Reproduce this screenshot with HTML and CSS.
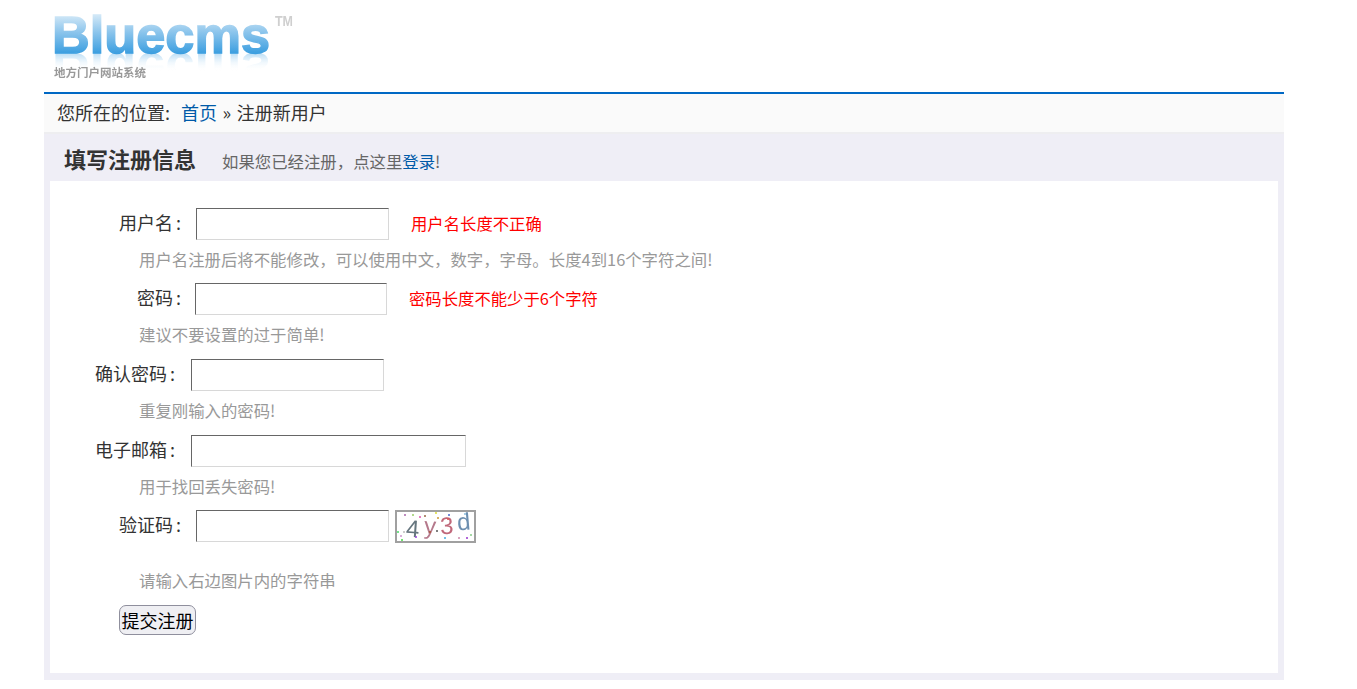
FILE: index.html
```html
<!DOCTYPE html>
<html lang="zh">
<head>
<meta charset="utf-8">
<title>注册新用户</title>
<link rel="stylesheet" href="styles.css">
</head>
<body>
<div class="page">
  <header class="top">
    <svg class="logo" width="260" height="92" viewBox="0 0 260 92">
      <defs>
        <linearGradient id="lg" x1="0" y1="15" x2="0" y2="53" gradientUnits="userSpaceOnUse">
          <stop offset="0" stop-color="#d2e8f7"/>
          <stop offset="0.45" stop-color="#8cc5ec"/>
          <stop offset="1" stop-color="#3d9fe0"/>
        </linearGradient>
        <linearGradient id="rg" x1="0" y1="53" x2="0" y2="35" gradientUnits="userSpaceOnUse">
          <stop offset="0" stop-color="#a8d4f2" stop-opacity=".8"/>
          <stop offset="1" stop-color="#ffffff" stop-opacity="0"/>
        </linearGradient>
        <filter id="sf"><feGaussianBlur stdDeviation="0.5"/></filter>
      </defs>
      <g filter="url(#sf)">
        <text class="logo-word" x="8" y="53" transform="translate(0,106) scale(1,-1)" fill="url(#rg)" textLength="218" lengthAdjust="spacingAndGlyphs" aria-hidden="true">Bluecms</text>
        <text class="logo-word" x="8" y="53" fill="url(#lg)" stroke="url(#lg)" textLength="218" lengthAdjust="spacingAndGlyphs">Bluecms</text>
        <text class="logo-tm" x="231" y="26" textLength="18" lengthAdjust="spacingAndGlyphs">TM</text>
        <text class="logo-sub" x="10" y="77" textLength="92" lengthAdjust="spacingAndGlyphs">地方门户网站系统</text>
      </g>
    </svg>
  </header>
  <nav class="crumb">您所在的位置:&nbsp;&nbsp;<a href="#">首页</a> » 注册新用户</nav>
  <main class="panel">
    <div class="panel-head">
      <h2>填写注册信息</h2>
      <span class="panel-sub">如果您已经注册，点这里<a href="#">登录</a>!</span>
    </div>
    <form class="box">
      <div class="field f-name">
        <label>用户名<span class="colon">:</span></label>
        <input class="in w193" type="text">
        <span class="err">用户名长度不正确</span>
      </div>
      <p class="hint">用户名注册后将不能修改，可以使用中文，数字，字母。长度4到16个字符之间!</p>
      <div class="field f-pass">
        <label>密码<span class="colon">:</span></label>
        <input class="in w192" type="password">
        <span class="err">密码长度不能少于6个字符</span>
      </div>
      <p class="hint hint-tall">建议不要设置的过于简单!</p>
      <div class="field f-wide">
        <label>确认密码<span class="colon">:</span></label>
        <input class="in w193" type="password">
      </div>
      <p class="hint hint-tall">重复刚输入的密码!</p>
      <div class="field f-wide">
        <label>电子邮箱<span class="colon">:</span></label>
        <input class="in w275" type="text">
      </div>
      <p class="hint">用于找回丢失密码!</p>
      <div class="field f-name">
        <label>验证码<span class="colon">:</span></label>
        <input class="in w193" type="text">
        <svg class="captcha" width="81" height="33" viewBox="0 0 81 33">
          <rect x="1" y="1" width="79" height="31" fill="#fff" stroke="#a0a0a0" stroke-width="2"/>
          <g class="cap-chars">
            <text x="11" y="27" fill="#66767f" transform="rotate(4 18 20)">4</text>
            <text x="29" y="24" fill="#b5798c" transform="rotate(3 36 20)">y</text>
            <text x="45" y="24" fill="#c0687a" transform="rotate(-3 51 16)">3</text>
            <text x="62" y="20" fill="#6d8fb0" transform="rotate(-5 68 12)">d</text>
          </g>
          <g>
            <circle cx="10" cy="5" r="1" fill="#a6a"/><circle cx="18" cy="5" r="1" fill="#9c6"/>
            <circle cx="25" cy="7" r="1" fill="#d5a"/><circle cx="30" cy="6" r="1" fill="#964"/>
            <circle cx="41" cy="3" r="1" fill="#dd3"/><circle cx="43" cy="8" r="1" fill="#c93"/>
            <circle cx="54" cy="5" r="1" fill="#46c"/><circle cx="53" cy="9" r="1" fill="#d55"/>
            <circle cx="3" cy="22" r="1" fill="#4d6"/><circle cx="6" cy="26" r="1" fill="#c9c"/>
            <circle cx="9" cy="22" r="1" fill="#bbb"/><circle cx="21" cy="27" r="1" fill="#94d"/>
            <circle cx="35" cy="22" r="1" fill="#a53"/><circle cx="50" cy="28" r="1" fill="#4ad"/>
            <circle cx="72" cy="28" r="1" fill="#93c"/><circle cx="76" cy="25" r="1" fill="#8c8"/>
            <circle cx="7" cy="30" r="1" fill="#4d4"/><circle cx="42" cy="21" r="1" fill="#555"/>
            <circle cx="70" cy="4" r="1" fill="#8bd"/><circle cx="64" cy="28" r="1" fill="#c8a"/>
          </g>
        </svg>
      </div>
      <p class="hint hint-cap">请输入右边图片内的字符串</p>
      <div class="actions"><button class="submit" type="button">提交注册</button></div>
    </form>
  </main>
</div>
</body>
</html>
```
FILE: styles.css
```css
html, body {
  margin: 0;
  padding: 0;
  background: #fff;
}
body {
  font-family: "Noto Sans CJK SC", "Liberation Sans", sans-serif;
  color: #333;
  height: 689px;
  overflow: hidden;
}
a {
  color: #005aa8;
  text-decoration: none;
}
.page {
  width: 1240px;
  margin-left: 44px;
}
.top {
  height: 92px;
  border-bottom: 2px solid #0068c4;
}
.logo {
  display: block;
}
.logo-word {
  font-family: "Liberation Sans", sans-serif;
  font-weight: 700;
  font-size: 52px;
  stroke-width: 1.4px;
}
.logo-tm {
  font-family: "Liberation Sans", sans-serif;
  font-size: 14px;
  font-weight: 700;
  fill: #cfcfcf;
}
.logo-sub {
  font-family: "Noto Sans CJK SC", sans-serif;
  font-size: 11.5px;
  font-weight: 700;
  fill: #999;
}
.crumb {
  box-sizing: border-box;
  height: 40px;
  padding: 6px 0 0 13px;
  background: #fafafa;
  border-bottom: 2px solid #eeeef0;
  font-size: 18px;
  line-height: 24px;
  word-spacing: 1.5px;
}
.panel {
  background: #efeef6;
  padding: 0 6px 7px;
}
.panel-head {
  box-sizing: border-box;
  display: flex;
  align-items: baseline;
  height: 47px;
  padding: 9px 0 0 14px;
  line-height: 30px;
}
.panel-head h2 {
  margin: 0 26px 0 0;
  font-size: 22px;
  font-weight: 700;
  color: #333;
}
.panel-sub {
  font-size: 16.4px;
  color: #666;
}
.box {
  background: #fff;
  height: 492px;
  padding-top: 27px;
  box-sizing: border-box;
}
.field {
  display: flex;
  align-items: center;
  height: 32px;
}
.field label {
  font-size: 18px;
  line-height: 26px;
  padding-bottom: 4px;
  color: #333;
  white-space: nowrap;
}
.colon {
  margin-left: 3px;
}
.f-name { padding-left: 69px; }
.f-name label { margin-right: 15px; }
.f-pass { padding-left: 87px; }
.f-pass label { margin-right: 14px; }
.f-wide { padding-left: 45px; }
.f-wide label { margin-right: 16px; }
.in {
  box-sizing: border-box;
  height: 32px;
  margin: 0;
  padding: 0;
  background: #fff;
  border: 1px solid;
  border-color: #666 #d8d8d8 #d8d8d8 #666;
  outline: 0;
}
.w192 { width: 192px; }
.w193 { width: 193px; }
.w275 { width: 275px; }
.err {
  margin-left: 22px;
  padding-bottom: 3px;
  font-size: 16.35px;
  line-height: 24px;
  color: #f00;
}
.hint {
  margin: 0 0 0 89px;
  height: 43px;
  padding-top: 7px;
  box-sizing: border-box;
  font-size: 16.4px;
  line-height: 24px;
  color: #999;
}
.hint-tall {
  height: 44px;
}
.captcha {
  margin-left: 6px;
  filter: blur(0.4px);
}
.cap-chars {
  font-family: "Liberation Sans", sans-serif;
  font-size: 24px;
}
.hint-cap {
  height: 63px;
  padding-top: 26px;
}
.actions {
  padding-left: 69px;
}
.submit {
  box-sizing: border-box;
  width: 77px;
  height: 30px;
  padding: 0;
  font-family: "Noto Sans CJK SC", sans-serif;
  font-size: 18px;
  line-height: 26px;
  color: #000;
  background: #efeff3;
  border: 1px solid #8f8f9d;
  border-radius: 7px;
}
```
